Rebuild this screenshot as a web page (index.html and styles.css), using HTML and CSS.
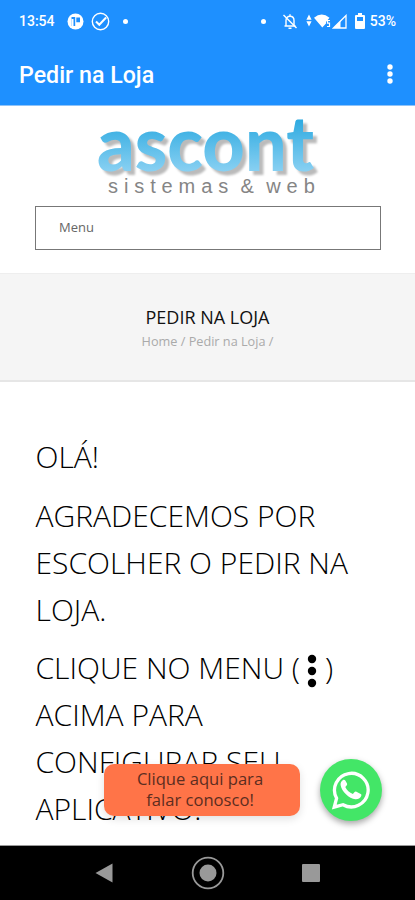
FILE: index.html
```html
<!DOCTYPE html>
<html lang="pt-BR">
<head>
  <meta charset="UTF-8" />
  <meta name="viewport" content="width=device-width, initial-scale=1.0"/>
  <title>Pedir na Loja</title>
  <link rel="stylesheet" href="styles.css">
</head>
<body>
  <header class="app-header">
    <div class="status-bar">
      <span class="clock">13:54</span>
      <svg class="ic-app" width="17" height="17" viewBox="0 0 17 17">
        <circle cx="8.5" cy="8.5" r="8" fill="#fff"/>
        <path d="M4.500 4h3.700v9H4.500zM9.300 4.500H13v4.700H9.300z" fill="#1e90ff"/>
        <path d="M4.500 6h2v8h-2z" fill="#fff"/>
      </svg>
      <svg class="ic-check" width="19" height="19" viewBox="0 0 19 19" fill="none" stroke="#fff">
        <circle cx="9.5" cy="9.5" r="8.2" stroke-width="1.4"/>
        <path d="M5 9.5l3.300 3.300 6.800-7.300" stroke-width="2"/>
      </svg>
      <span class="dot"></span>
      <div class="status-right">
        <span class="dot"></span>
        <svg class="ic-bell" width="16" height="17" viewBox="0 0 16 17" fill="none" stroke="#fff" stroke-width="1.4">
          <path d="M4 13V7.5C4 5 5.500 3.300 8 3.300S12 5 12 7.500V13M2.500 13h11M8 1.300v2M6.500 15.300h3"/>
          <path d="M1.500 2l13 13"/>
        </svg>
        <svg class="ic-data" width="6" height="14" viewBox="0 0 6 14" fill="#fff">
          <path d="M3 .5l2.600 5.200H.4zM3 12.500L.4 7.300h5.200z"/>
        </svg>
        <svg class="ic-wifi" width="17" height="14" viewBox="0 0 17 14" fill="#fff">
          <path d="M0 3.800Q7.700-3 15.500 3.800L12 8v1.500L8.300 13.500z"/>
          <path d="M16 6.500h-2.500v2.700h2V12.500H13" fill="none" stroke="#fff" stroke-width="1.200"/>
        </svg>
        <svg class="ic-signal" width="15" height="15" viewBox="0 0 15 15">
          <path d="M14 1.500V14H1.500z" fill="none" stroke="#fff" stroke-width="1.300"/>
          <path d="M8.500 7v7H1.500z" fill="#fff"/>
        </svg>
        <svg class="ic-battery" width="10" height="16" viewBox="0 0 10 16">
          <path d="M3 0h4v2h2q1 0 1 1v12q0 1-1 1H1q-1 0-1-1V3q0-1 1-1h2z" fill="#fff"/>
          <path d="M2 4h6v4H2z" fill="#1e90ff"/>
        </svg>
        <span class="percent">53%</span>
      </div>
    </div>
    <div class="toolbar">
      <h1>Pedir na Loja</h1>
      <svg width="6" height="20" viewBox="0 0 6 20" fill="#fff">
        <circle cx="3" cy="3" r="2.700"/>
        <circle cx="3" cy="10" r="2.700"/>
        <circle cx="3" cy="17" r="2.700"/>
      </svg>
    </div>
  </header>

  <main class="page">
    <div class="site-top">
      <svg class="logo" width="240" height="100" viewBox="0 0 240 100">
        <defs>
          <linearGradient id="blue" gradientUnits="userSpaceOnUse" x1="0" y1="12" x2="0" y2="68">
            <stop offset="0" stop-color="#2ba9e0"/>
            <stop offset="1" stop-color="#8dd2f3"/>
          </linearGradient>
        </defs>
        <text class="logo-name" x="9" y="65" textLength="217" lengthAdjust="spacingAndGlyphs" fill="url(#blue)">ascont</text>
        <text class="logo-sub" x="20" y="87">sistemas &amp; web</text>
      </svg>
      <div class="menu-select">Menu</div>
    </div>

    <section class="page-title">
      <h2>PEDIR NA LOJA</h2>
      <div class="breadcrumb">Home / Pedir na Loja /</div>
    </section>

    <section class="content">
      <p>OLÁ!</p>
      <p>AGRADECEMOS POR ESCOLHER O PEDIR NA LOJA.</p>
      <p>CLIQUE NO MENU (<svg class="more" width="25" height="34" viewBox="0 0 25 34">
        <circle cx="12" cy="5" r="4.200"/>
        <circle cx="12" cy="17" r="4.200"/>
        <circle cx="12" cy="29" r="4.200"/>
      </svg>) ACIMA PARA CONFIGURAR SEU APLICATIVO.</p>
    </section>
  </main>

  <div class="chat">
    <div class="chat-label">Clique aqui para<br>falar conosco!</div>
    <div class="chat-btn">
      <svg width="40" height="40" viewBox="0 0 40 40">
        <path d="M3.200 37.200l2.400-9A16.800 16.800 0 1 1 12 34.700z" fill="none" stroke="#fff" stroke-width="3.300"/>
        <path d="M14.300 10.500c-.6-1-1.500-1-2.300-.6-1.600 1-2.700 2.800-2.400 5 1 6.500 8.500 13.600 14.800 14.400 2.500.2 4.800-1 5.700-3 .5-1.300.3-2-.4-2.400l-4.300-2.200c-.8-.3-1.300-.2-1.800.4l-1.700 2c-3.400-1.300-6.200-4-7.600-7l1.500-1.900c.4-.5.5-1 .2-1.600z" fill="#fff"/>
      </svg>
    </div>
  </div>

  <nav class="nav-bar">
    <svg width="18" height="20" viewBox="0 0 18 20"><path d="M17.500 .5v19L.5 10z" fill="#999"/></svg>
    <svg width="34" height="34" viewBox="0 0 34 34">
      <circle cx="17" cy="17" r="15.300" fill="none" stroke="#999" stroke-width="1.800"/>
      <circle cx="17" cy="17" r="8.500" fill="#999"/>
    </svg>
    <svg width="18" height="18" viewBox="0 0 18 18"><rect width="18" height="18" rx="1" fill="#999"/></svg>
  </nav>
</body>
</html>
```

FILE: styles.css
```css
* {
  box-sizing: border-box;
}

body {
  margin: 0;
  height: 900px;
  display: flex;
  flex-direction: column;
  position: relative;
  overflow: hidden;
  background: #fff;
  font-family: "Open Sans", sans-serif;
}

h1, h2, p {
  margin: 0;
}

svg {
  display: block;
  flex-shrink: 0;
}

/* app header */
.app-header {
  height: 105px;
  flex-shrink: 0;
  background: #1e90ff;
  color: #fff;
  font-family: Roboto, sans-serif;
}

.status-bar {
  height: 42px;
  padding: 0 19px;
  display: flex;
  align-items: center;
  font-size: 14px;
  font-weight: 500;
}

.clock {
  width: 36px;
}

.ic-app {
  margin-left: 12px;
}

.ic-check {
  margin-left: 7px;
}

.dot {
  width: 5px;
  height: 5px;
  border-radius: 50%;
  background: #fff;
}

.status-bar > .dot {
  margin-left: 13px;
}

.status-right {
  margin-left: auto;
  display: flex;
  align-items: center;
}

.ic-bell {
  margin-left: 16px;
}

.ic-data {
  margin-left: 8px;
}

.ic-wifi {
  margin-left: 2px;
}

.ic-signal {
  margin-left: 1px;
}

.ic-battery {
  margin-left: 8px;
}

.percent {
  margin-left: 5px;
}

.toolbar {
  height: 63px;
  padding: 0 22px 0 19px;
  display: flex;
  align-items: center;
  justify-content: space-between;
}

.toolbar h1 {
  padding-top: 3px;
  font-size: 23.2px;
  font-weight: 500;
}

/* site */
.page {
  flex: 1;
  min-height: 0;
  overflow: hidden;
}

.site-top {
  height: 168px;
  padding: 0 34px 0 35px;
  border-top: 1px solid #8fc3f8;
}

.logo {
  margin-left: 53px;
  overflow: visible;
}

.logo-name {
  font-family: Lato, sans-serif;
  font-size: 77px;
  font-weight: 900;
  filter: drop-shadow(4px 4px 1px #bbb);
}

.logo-sub {
  font-family: "Liberation Sans", sans-serif;
  font-size: 20px;
  letter-spacing: 5.9px;
  word-spacing: -5px;
  fill: #858585;
}

.menu-select {
  height: 44px;
  padding-left: 23px;
  border: 1px solid #777;
  font-size: 13px;
  line-height: 41px;
  color: #666;
}

.page-title {
  height: 109px;
  padding-top: 31px;
  background: #f5f5f5;
  border-top: 1px solid #eee;
  border-bottom: 2px solid #e6e6e6;
  text-align: center;
}

.page-title h2 {
  font-size: 18px;
  font-weight: 450;
  line-height: 24px;
  color: #111;
}

.breadcrumb {
  font-size: 12.7px;
  line-height: 24px;
  color: #aaa;
}

.content {
  padding: 51px 35px 0 35.5px;
}

.content p {
  margin-bottom: 11.7px;
  font-size: 30px;
  font-weight: 320;
  line-height: 47px;
  color: #000;
}

.more {
  display: inline-block;
  margin: -8px 0;
  vertical-align: -1px;
}

/* floating contact */
.chat {
  position: absolute;
  right: 33px;
  bottom: 79px;
  display: flex;
  align-items: center;
  gap: 20px;
}

.chat-label {
  width: 196px;
  height: 52px;
  padding: 4px 4px 0 0;
  border-radius: 10px;
  background: #ff7448;
  box-shadow: 0 3px 8px rgba(0, 0, 0, 0.12);
  font-size: 16.6px;
  line-height: 21px;
  text-align: center;
  color: #5c2d20;
}

.chat-btn {
  width: 62px;
  height: 62px;
  border-radius: 50%;
  display: flex;
  align-items: center;
  justify-content: center;
  background: #43e667;
  box-shadow: 0 3px 6px rgba(0, 0, 0, 0.35);
}

/* system navigation */
.nav-bar {
  height: 55px;
  flex-shrink: 0;
  padding: 0 95px;
  display: flex;
  align-items: center;
  justify-content: space-between;
  background: #000;
  border-top: 1px solid #999;
}
```
